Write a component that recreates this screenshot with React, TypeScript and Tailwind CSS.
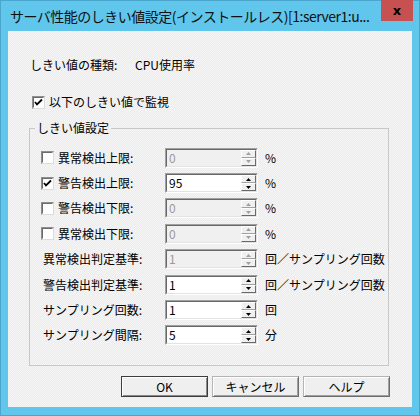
import React from "react";

const font = { fontFamily: '"Noto Sans CJK JP", "Noto Sans", sans-serif' };

function Check({ checked }: { checked: boolean }) {
  return (
    <div className="w-[13px] h-[13px] border border-[#8f8f8f] border-b-[#dcdcdc] border-r-[#dcdcdc] bg-white flex items-center justify-center shrink-0">
      <div className="w-[11px] h-[11px] border border-[#6b6b6b] border-b-white border-r-white flex items-center justify-center">
        {checked && (
          <svg width="9" height="9" viewBox="0 0 9 9">
            <path d="M1 4 L3 6.5 L8 1.5" stroke="#000" strokeWidth="1.8" fill="none" />
          </svg>
        )}
      </div>
    </div>
  );
}

function Arrow({ up, enabled }: { up: boolean; enabled: boolean }) {
  return (
    <svg width="5" height="3" viewBox="0 0 5 3">
      <path d={up ? "M2.5 0 L5 3 L0 3 Z" : "M0 0 L5 0 L2.5 3 Z"} fill={enabled ? "#000" : "#a0a0a0"} />
    </svg>
  );
}

function Spin({ value, enabled }: { value: string; enabled: boolean }) {
  return (
    <div className="w-[93px] h-[20px] border border-[#a0a0a0] border-b-[#ffffff] border-r-[#ffffff] flex">
      <div
        className={
          "flex-1 flex border border-[#696969] border-b-[#e3e3e3] border-r-[#e3e3e3] " +
          (enabled ? "bg-white" : "bg-[#f0f0f0]")
        }
      >
        <div
          className={
            "flex-1 pl-[2px] text-[12px] leading-[16px] " + (enabled ? "text-black" : "text-[#9a9a9a]")
          }
        >
          {value}
        </div>
        <div className="w-[15px] flex flex-col">
          <div className="h-[8px] bg-[#f0f0f0] border border-white border-b-[#a0a0a0] border-r-[#696969] flex items-center justify-center">
            <Arrow up enabled={enabled} />
          </div>
          <div className="h-[8px] bg-[#f0f0f0] border border-white border-b-[#696969] border-r-[#696969] flex items-center justify-center">
            <Arrow up={false} enabled={enabled} />
          </div>
        </div>
      </div>
    </div>
  );
}

function Row({
  label,
  check,
  value,
  enabled,
  unit,
}: {
  label: string;
  check?: boolean;
  value: string;
  enabled: boolean;
  unit: string;
}) {
  return (
    <div className="h-[25.4px] flex items-center">
      <div className="w-[124px] flex items-center">
        {check !== undefined ? (
          <>
            <Check checked={check} />
            <span className="ml-[4px] text-[12px] leading-[14px]">{label}</span>
          </>
        ) : (
          <span className="ml-[2px] text-[12px] leading-[14px]">{label}</span>
        )}
      </div>
      <Spin value={value} enabled={enabled} />
      <span className="ml-[7px] text-[12px] leading-[14px]">{unit}</span>
    </div>
  );
}

function Btn({ label, def }: { label: string; def?: boolean }) {
  return (
    <div
      className={
        "w-[87px] h-[21px] flex items-center justify-center text-[12px] leading-[14px] bg-[#efefef] border " +
        (def
          ? "border-[#3c3c3c] shadow-[inset_1px_1px_0_#fff,inset_-1px_-1px_0_#8a8a8a]"
          : "border-[#b4b4b4] border-b-[#6e6e6e] border-r-[#6e6e6e] shadow-[inset_1px_1px_0_#fff,inset_-1px_-1px_0_#a0a0a0]")
      }
    >
      {label}
    </div>
  );
}

export default function App() {
  return (
    <div
      className="w-[420px] h-[416px] bg-[#60c6ec] border border-[#4aa6cc] flex flex-col text-black"
      style={font}
    >
      <div className="h-[30px] flex items-start relative">
        <div className="pl-[9px] pt-[5px] text-[14px] tracking-[-0.5px] leading-[20px] text-[#111] whitespace-nowrap w-[372px]">
          サーバ性能のしきい値設定(インストールレス)[1:server1:u...
        </div>
        <div className="absolute right-[6px] top-[-1px] w-[32px] h-[21px] bg-[#c75050] flex items-center justify-center">
          <span className="text-[13px] font-bold leading-[14px] text-black" style={{ fontFamily: '"DejaVu Sans", sans-serif' }}>
            x
          </span>
        </div>
      </div>
      <div className="mx-[7px] h-[376px] bg-[repeating-conic-gradient(#f6f6f6_0%_25%,#ebebeb_0%_50%)] bg-[length:2px_2px] pl-[21px] pt-[27px] flex flex-col">
        <div className="h-[14px] flex text-[12px] leading-[14px]">
          <span className="ml-[1px] w-[105px]">しきい値の種類:</span>
          <span>CPU使用率</span>
        </div>
        <div className="mt-[23px] h-[14px] flex items-center ml-[3px]">
          <Check checked />
          <span className="ml-[4px] text-[12px] leading-[14px]">以下のしきい値で監視</span>
        </div>
        <div className="mt-[19px] w-[360px] h-[238px] border border-[#c8c8c8] relative pl-[11px] pt-[16px] flex flex-col">
          <span className="absolute left-[5px] top-[-8px] px-[2px] text-[12px] leading-[14px] bg-[#f0f0f0]">
            しきい値設定
          </span>
          <Row label="異常検出上限:" check={false} value="0" enabled={false} unit="%" />
          <Row label="警告検出上限:" check value="95" enabled unit="%" />
          <Row label="警告検出下限:" check={false} value="0" enabled={false} unit="%" />
          <Row label="異常検出下限:" check={false} value="0" enabled={false} unit="%" />
          <Row label="異常検出判定基準:" value="1" enabled={false} unit="回／サンプリング回数" />
          <Row label="警告検出判定基準:" value="1" enabled unit="回／サンプリング回数" />
          <Row label="サンプリング回数:" value="1" enabled unit="回" />
          <Row label="サンプリング間隔:" value="5" enabled unit="分" />
        </div>
        <div className="mt-[10px] w-[361px] flex justify-end gap-[4px]">
          <Btn label="OK" def />
          <Btn label="キャンセル" />
          <Btn label="ヘルプ" />
        </div>
      </div>
    </div>
  );
}
